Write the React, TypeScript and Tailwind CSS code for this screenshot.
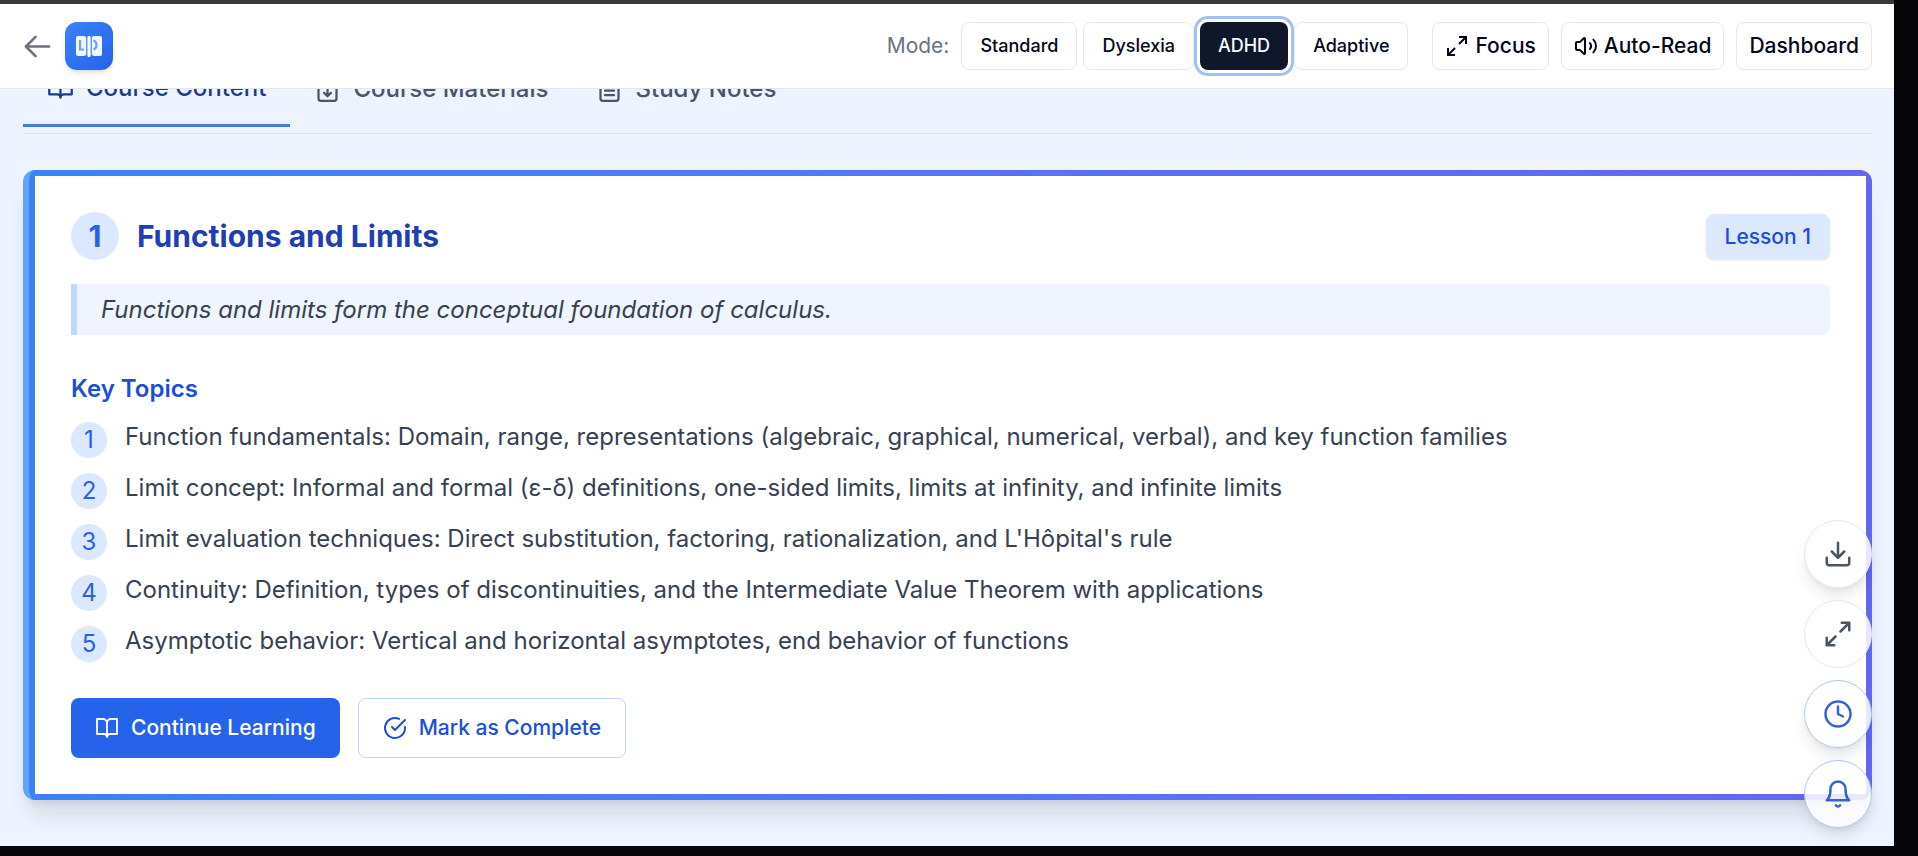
import React from "react";
import { Volume2 } from "lucide-react";

type IconProps = { className?: string; strokeWidth?: number };

function Icon({ className, strokeWidth = 2, children }: IconProps & { children: React.ReactNode }) {
  return (
    <svg viewBox="0 0 24 24" fill="none" stroke="currentColor" strokeWidth={strokeWidth} strokeLinecap="round" strokeLinejoin="round" className={className} aria-hidden="true">
      {children}
    </svg>
  );
}

const BackArrow = (p: IconProps) => (
  <Icon {...p}><path d="M10.5 19.5 3 12m0 0 7.5-7.5M3 12h18" /></Icon>
);
const Book = (p: IconProps) => (
  <Icon {...p}><path d="M2 3h6a4 4 0 0 1 4 4v14a3 3 0 0 0-3-3H2zM22 3h-6a4 4 0 0 0-4 4v14a3 3 0 0 1 3-3h7z" /></Icon>
);
const Materials = (p: IconProps) => (
  <Icon {...p}><path d="M14.5 2H6a2 2 0 0 0-2 2v16a2 2 0 0 0 2 2h12a2 2 0 0 0 2-2V7.500zM14 2v6h6M12 11v7M9 15l3 3 3-3" /></Icon>
);
const Notes = (p: IconProps) => (
  <Icon {...p}><path d="M14.5 2H6a2 2 0 0 0-2 2v16a2 2 0 0 0 2 2h12a2 2 0 0 0 2-2V7.500zM14 2v6h6M8 13h8M8 17h8M8 9h2" /></Icon>
);
const Expand = (p: IconProps) => (
  <Icon {...p}><path d="M15 3h6v6M9 21H3v-6M21 3l-7 7M3 21l7-7" /></Icon>
);
const SharpExpand = ({ className }: IconProps) => (
  <svg viewBox="0 0 24 24" fill="none" stroke="currentColor" strokeWidth={2} className={className} aria-hidden="true">
    <path d="M14 3h7v7M10 21H3v-7M21 3l-7 7M3 21l7-7" />
  </svg>
);
const CheckCircle = (p: IconProps) => (
  <Icon {...p}><path d="M22 11.080V12a10 10 0 1 1-5.930-9.140" /><path d="m9 11 3 3L22 4" /></Icon>
);
const Download = (p: IconProps) => (
  <Icon {...p}><path d="M21 15v4a2 2 0 0 1-2 2H5a2 2 0 0 1-2-2v-4M7 10l5 5 5-5M12 15V3" /></Icon>
);
const Clock = (p: IconProps) => (
  <Icon {...p}><circle cx="12" cy="12" r="10" /><path d="M12 6v6l4 2" /></Icon>
);
const Bell = (p: IconProps) => (
  <Icon {...p}><path d="M6 8a6 6 0 0 1 12 0c0 7 3 9 3 9H3s3-2 3-9M10.300 21a1.940 1.940 0 0 0 3.400 0" /></Icon>
);

function Logo() {
  return (
    <svg viewBox="0 0 48 48" className="size-12" aria-hidden="true">
      <rect x="11" y="14" width="10" height="20" rx="2" fill="#eff6ff" />
      <rect x="27" y="14" width="10" height="20" rx="2" fill="#eff6ff" />
      <path d="M21.500 14.500 24 16l2.500-1.500V33L24 35l-2.500-2z" fill="#93bbfa" />
      <path d="M24 14v21" stroke="#fff" strokeWidth="2.500" />
      <path d="M15 18v9.500h4" fill="none" stroke="#60a5fa" strokeWidth="2.200" />
      <path d="M28.500 18.500c4 1.500 4 7.500 0 9" fill="none" stroke="#60a5fa" strokeWidth="2.200" />
    </svg>
  );
}

const modes = ["Standard", "Dyslexia", "ADHD", "Adaptive"];

const topics = [
  "Function fundamentals: Domain, range, representations (algebraic, graphical, numerical, verbal), and key function families",
  "Limit concept: Informal and formal (ε-δ) definitions, one-sided limits, limits at infinity, and infinite limits",
  "Limit evaluation techniques: Direct substitution, factoring, rationalization, and L'Hôpital's rule",
  "Continuity: Definition, types of discontinuities, and the Intermediate Value Theorem with applications",
  "Asymptotic behavior: Vertical and horizontal asymptotes, end behavior of functions",
];

const headerButton = "flex h-12 items-center rounded-lg border border-[#e5e7eb] bg-white font-medium text-[#020817]";
const toolButton = "flex size-17 items-center justify-center rounded-full border bg-white/85";

function Header() {
  return (
    <header className="relative z-10 flex h-[85px] items-center justify-between border-b border-[#e2e6ee] bg-white px-[22px]">
      <div className="flex items-center gap-3">
        <button aria-label="Back" className="text-[#6b7280]"><BackArrow className="size-[31px]" strokeWidth={2} /></button>
        <a href="#home" aria-label="Home" className="rounded-xl bg-linear-to-br from-[#3b82f6] to-[#2563eb] shadow-md"><Logo /></a>
      </div>
      <div className="flex items-center gap-6">
        <div className="flex items-center gap-1.5">
          <span className="mr-1.5 text-[21px] text-[#6b7280]">Mode:</span>
          {modes.map((mode) => (
            <button
              key={mode}
              aria-pressed={mode === "ADHD"}
              className={
                mode === "ADHD"
                  ? "relative z-10 h-12 rounded-lg bg-[#0f172a] px-[18px] text-lg font-medium text-[#f8fafc] ring-3 ring-[#a3bff3] ring-offset-3"
                  : headerButton + " px-[18px] text-lg"
              }
            >
              {mode}
            </button>
          ))}
        </div>
        <div className="flex items-center gap-3">
          <button className={headerButton + " gap-1.5 px-3 text-[21px]"}><SharpExpand className="size-6" />Focus</button>
          <button className={headerButton + " gap-1.5 px-3 text-[21px]"}><Volume2 className="size-6" strokeWidth={2} />Auto-Read</button>
          <button className={headerButton + " px-3 text-[21px]"}>Dashboard</button>
        </div>
      </div>
    </header>
  );
}

function Tabs() {
  return (
    <nav aria-label="Course sections" className="-mt-6 flex border-b border-[#dfe5f0] pb-1.5 text-2xl font-medium">
      <a href="#content" className="flex h-[62px] items-center gap-3 border-b-3 border-[#3f7ce4] px-6 pb-3.5 text-[#1e3a8a]"><Book className="size-[27px]" />Course Content</a>
      <a href="#materials" className="flex h-[62px] items-center gap-3 px-6 pb-3.5 text-[#4b5563]"><Materials className="size-[27px]" />Course Materials</a>
      <a href="#notes" className="flex h-[62px] items-center gap-3 px-6 pb-3.5 text-[#4b5563]"><Notes className="size-[27px]" />Study Notes</a>
    </nav>
  );
}

function Lesson() {
  return (
    <section className="overflow-hidden rounded-xl border-l-6 border-[#60a5fa] bg-linear-to-r from-[#3b82f6] to-[#6366f1] p-1.5 shadow-xl">
      <div className="bg-white px-9 py-9">
        <div className="flex items-center justify-between">
          <div className="flex items-center gap-[18px]">
            <span className="flex size-12 items-center justify-center rounded-full bg-[#dbe8fe] text-3xl font-bold text-[#2563eb]">1</span>
            <h2 className="text-3xl font-bold text-[#1e40af]">Functions and Limits</h2>
          </div>
          <span className="rounded-lg border border-[#dbe8fe] bg-[#dbe8fe] px-[18px] py-1.5 text-[21px]/[31px] font-medium text-[#1d4ed8] shadow">Lesson 1</span>
        </div>
        <p className="mt-6 rounded-r-lg border-l-6 border-[#bfd8fb] bg-[#eff4ff] py-1.5 pl-6 text-2xl/[39px] text-[#374151] italic">Functions and limits form the conceptual foundation of calculus.</p>
        <h3 className="mt-9 text-2xl/9 font-semibold text-[#1d4ed8]">Key Topics</h3>
        <ol className="mt-3 flex flex-col gap-3">
          {topics.map((topic, i) => (
            <li key={topic} className="flex items-start gap-[18px] text-2xl/9 text-[#374151]">
              <span className="mt-[3px] flex size-9 shrink-0 items-center justify-center rounded-full bg-[#dbe8fe] text-[#2563eb]">{i + 1}</span>
              <span>{topic}</span>
            </li>
          ))}
        </ol>
        <div className="mt-9 flex gap-[18px] text-[21px] font-medium">
          <button className="flex h-15 items-center gap-3 rounded-lg bg-[#2563eb] px-6 text-white"><Book className="size-6" strokeWidth={1.8} />Continue Learning</button>
          <button className="flex h-15 items-center gap-3 rounded-lg border border-[#c3d6f3] bg-white px-6 text-[#1d4ed8]"><CheckCircle className="size-6" />Mark as Complete</button>
        </div>
      </div>
    </section>
  );
}

export default function App() {
  return (
    <div className="min-h-screen bg-[#050507] pr-6 pb-2.5 font-['Inter',sans-serif]">
      <div className="relative min-h-[calc(100vh-10px)] overflow-hidden border-t-4 border-[#37373c] bg-[#eef4ff]">
        <Header />
        <main className="flex flex-col gap-9 px-[23px] pr-[22px] pb-[46px]">
          <Tabs />
          <Lesson />
        </main>
        <div className="absolute right-[22px] bottom-[18px] z-20 flex flex-col gap-3">
          <button aria-label="Download" className={toolButton + " border-[#e5e7eb] text-[#4b5563] shadow-lg"}><Download className="size-[30px]" /></button>
          <button aria-label="Expand" className={toolButton + " border-[#e5e7eb] text-[#4b5563]"}><Expand className="size-[30px]" /></button>
          <button aria-label="Timer" className={toolButton + " border-[#a9c8f0] text-[#3563cf] shadow-lg"}><Clock className="size-[30px]" /></button>
          <button aria-label="Notifications" className={toolButton + " border-[#a9c8f0] text-[#3563cf] shadow-lg"}><Bell className="size-[30px]" /></button>
        </div>
      </div>
    </div>
  );
}
